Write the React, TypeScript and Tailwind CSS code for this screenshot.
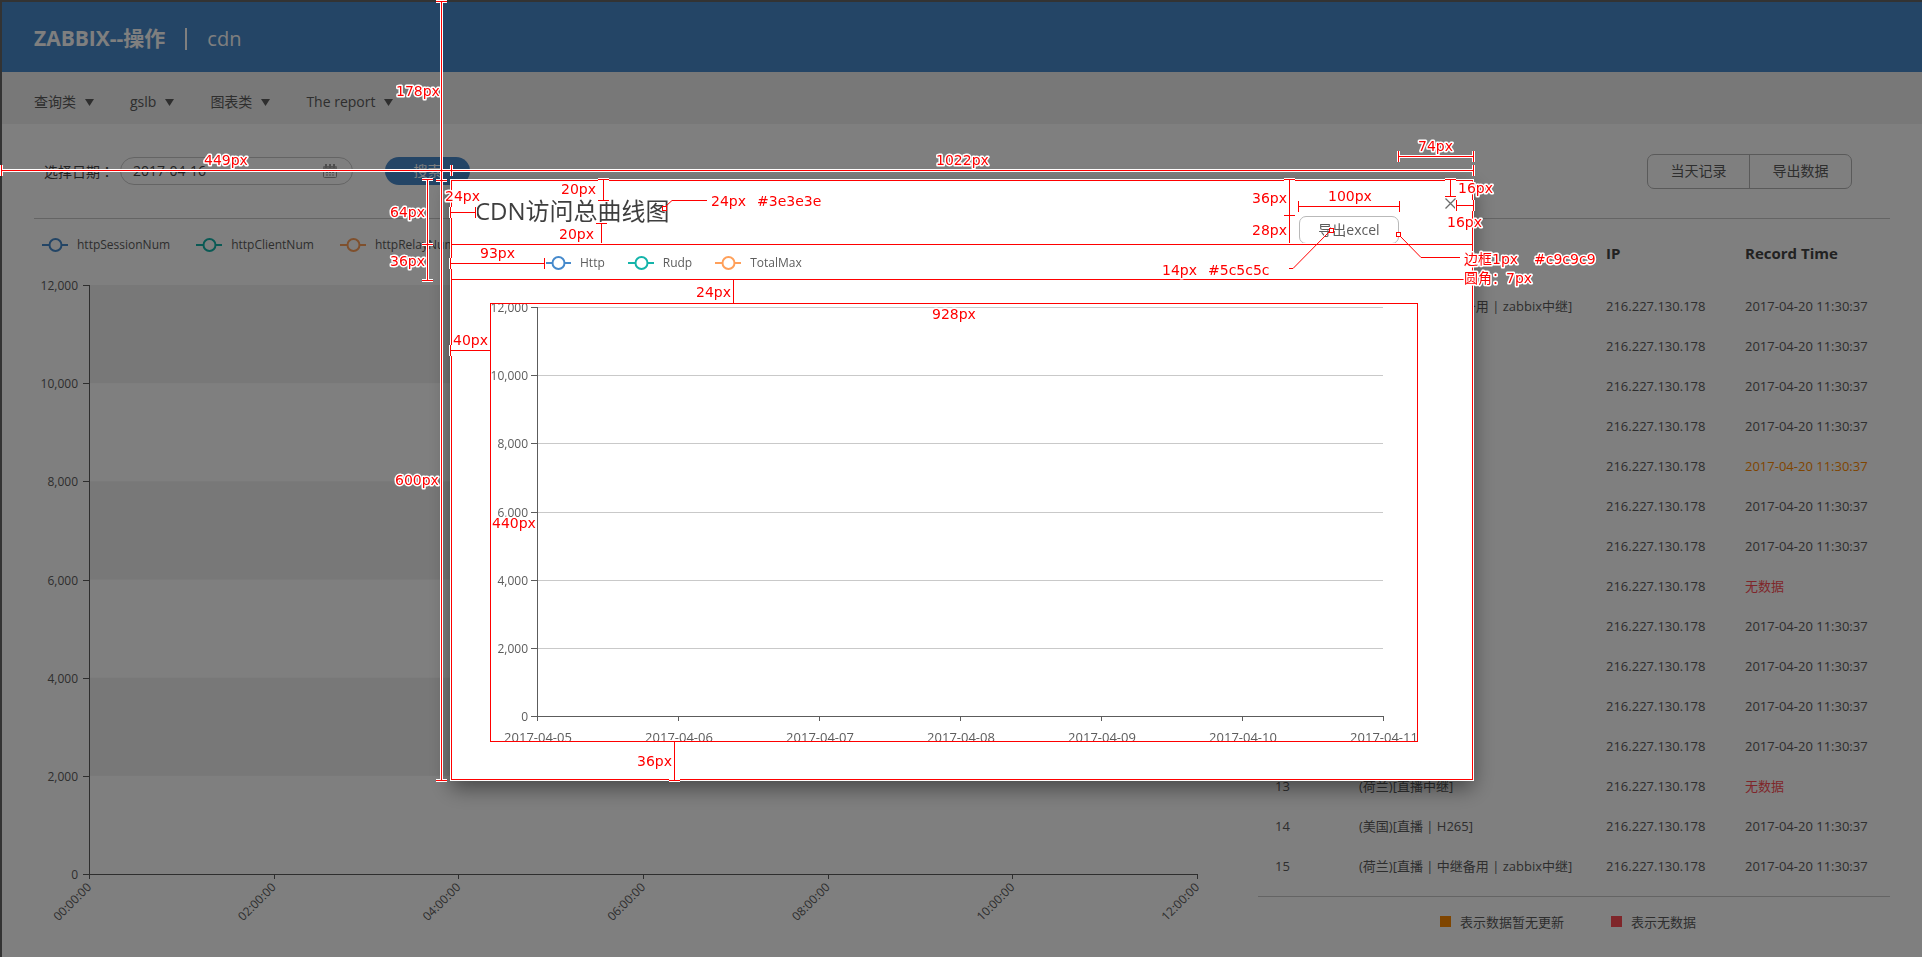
import React from 'react';

const FONT = "font-['Open_Sans','Noto_Sans_CJK_SC',sans-serif]";

type Series = { name: string; color: string };
type Row = { id: number; name: string; ip: string; time: string; state: 'ok' | 'stale' | 'none' };

const PAGE_SERIES: Series[] = [
  { name: 'httpSessionNum', color: '#468acc' },
  { name: 'httpClientNum', color: '#14b4aa' },
  { name: 'httpRelayNum', color: '#ffa05a' },
];

const DIALOG_SERIES: Series[] = [
  { name: 'Http', color: '#468acc' },
  { name: 'Rudp', color: '#14b4aa' },
  { name: 'TotalMax', color: '#ffa05a' },
];

const Y_LABELS = ['12,000', '10,000', '8,000', '6,000', '4,000', '2,000', '0'];
const HOURS = ['00:00:00', '02:00:00', '04:00:00', '06:00:00', '08:00:00', '10:00:00', '12:00:00'];
const DAYS = ['2017-04-05', '2017-04-06', '2017-04-07', '2017-04-08', '2017-04-09', '2017-04-10', '2017-04-11'];

const ROWS: Row[] = Array.from({ length: 15 }, (_, i) => {
  const id = i + 1;
  const state = id === 5 ? 'stale' : id === 8 || id === 13 ? 'none' : 'ok';
  const name =
    id === 1 || id === 15 ? '(荷兰)[直播 | 中继备用 | zabbix中继]' : id === 14 ? '(美国)[直播 | H265]' : '(荷兰)[直播中继]';
  return { id, name, ip: '216.227.130.178', time: state === 'none' ? '无数据' : '2017-04-20 11:30:37', state };
});

const STATE_COLOR = { ok: 'text-[#5c5c5c]', stale: 'text-[#ff8a00]', none: 'text-[#ff4d55]' };

function Legend({ items, className }: { items: Series[]; className: string }) {
  return (
    <ul className={`flex items-center text-xs leading-5 text-[#5c5c5c] ${className}`}>
      {items.map((s) => (
        <li key={s.name} className="flex items-center gap-[9px]">
          <svg width="26" height="14" aria-hidden="true">
            <path d="M0 7H26" stroke={s.color} strokeWidth="2" />
            <circle cx="13.5" cy="7" r="6" fill="#fff" stroke={s.color} strokeWidth="2" />
          </svg>
          {s.name}
        </li>
      ))}
    </ul>
  );
}

function SessionChart() {
  const h = 589;
  const step = h / 6;
  return (
    <svg className="block w-full overflow-visible text-xs" height={h} role="img" aria-label="cdn">
      {[0, 2, 4].map((i) => (
        <rect key={i} x="0" y={i * step} width="100%" height={step} fill="#f0f0f0" />
      ))}
      <g shapeRendering="crispEdges" stroke="#5c5c5c">
        <line x1="0.5" x2="0.5" y1="0" y2={h + 4} />
        <line x1="0" x2="100%" y1={h + 0.5} y2={h + 0.5} />
        {Y_LABELS.map((l, i) => (
          <line key={l} x1="-6" x2="0" y1={Math.round(i * step) + 0.5} y2={Math.round(i * step) + 0.5} />
        ))}
      </g>
      {Y_LABELS.map((l, i) => (
        <text key={l} x="-11" y={Math.round(i * step) + 5} textAnchor="end" fill="#5c5c5c">
          {l}
        </text>
      ))}
      {HOURS.map((l, i) => (
        <svg key={l} x={`${(i * 100) / 6}%`} y={h} className="overflow-visible">
          <path d="M.5 0V5" stroke="#5c5c5c" shapeRendering="crispEdges" />
          <text transform="translate(3 14) rotate(-45)" textAnchor="end" fill="#5c5c5c">
            {l}
          </text>
        </svg>
      ))}
    </svg>
  );
}

function VisitsChart() {
  const h = 409;
  const step = h / 6;
  return (
    <svg className="block w-full overflow-visible" height={h} role="img" aria-label="CDN访问总曲线图">
      <g shapeRendering="crispEdges">
        {Y_LABELS.map((l, i) => {
          const y = Math.round(i * step) + 0.5;
          return (
            <g key={l}>
              <line x1="0" x2="100%" y1={y} y2={y} stroke={i === 6 ? '#5c5c5c' : '#c9c9c9'} />
              <line x1="-6" x2="0" y1={y} y2={y} stroke="#5c5c5c" />
            </g>
          );
        })}
        <line x1="0.5" x2="0.5" y1="0" y2={h} stroke="#5c5c5c" />
      </g>
      {Y_LABELS.map((l, i) => (
        <text key={l} x="-9" y={Math.round(i * step) + 5} textAnchor="end" fill="#5c5c5c" className="text-xs">
          {l}
        </text>
      ))}
      {DAYS.map((l, i) => (
        <svg key={l} x={`${(i * 100) / 6}%`} y={h} className="overflow-visible">
          <path d="M.5 0V5" stroke="#5c5c5c" shapeRendering="crispEdges" />
          <text x="1" y="26" textAnchor="middle" fill="#5c5c5c" className="text-[13px]">
            {l}
          </text>
        </svg>
      ))}
    </svg>
  );
}

/* Spec overlay: each measure is a line with end caps, its label sits beside it. Coordinates are canvas pixels. */
const H_MEASURES: [number, number, number][] = [
  [170, 1, 451],
  [170, 451, 1473],
  [156, 1398, 1473],
  [212, 450, 475],
  [263, 450, 544],
  [350, 450, 490],
  [206, 1298, 1399],
  [205, 1456, 1473],
];
const V_MEASURES: [number, number, number][] = [
  [441, 1, 180],
  [441, 180, 780],
  [427, 179, 244],
  [427, 244, 280],
  [603, 179, 200],
  [733, 279, 303],
  [674, 741, 780],
  [1289, 179, 215],
  [1450, 179, 196],
];
const LABELS: [number, number, string][] = [
  [396, 96, '178px'],
  [204, 165, '449px'],
  [936, 165, '1022px'],
  [1418, 151, '74px'],
  [390, 217, '64px'],
  [390, 266, '36px'],
  [395, 485, '600px'],
  [445, 201, '24px'],
  [561, 194, '20px'],
  [559, 239, '20px'],
  [711, 206, '24px'],
  [757, 206, '#3e3e3e'],
  [480, 258, '93px'],
  [696, 297, '24px'],
  [453, 345, '40px'],
  [492, 528, '440px'],
  [932, 319, '928px'],
  [637, 766, '36px'],
  [1252, 203, '36px'],
  [1252, 235, '28px'],
  [1328, 201, '100px'],
  [1458, 193, '16px'],
  [1447, 227, '16px'],
  [1162, 275, '14px'],
  [1208, 275, '#5c5c5c'],
  [1464, 264, '边框1px'],
  [1534, 264, '#c9c9c9'],
  [1464, 283, '圆角：7px'],
];

function Measures() {
  const frame = 'M451.5 180.5H1472.5V779.5H451.5Z M451.5 244.5H1472.5 M451.5 279.5H1472.5';
  const plot = 'M490.5 303.5H1417.5V741.5H490.5Z';
  const h = H_MEASURES.map(([y, a, b]) => `M${a} ${y + 0.5}H${b + 1}M${a + 0.5} ${y - 5}V${y + 6}M${b + 0.5} ${y - 5}V${y + 6}`);
  const v = V_MEASURES.map(([x, a, b]) => `M${x + 0.5} ${a}V${b + 1}M${x - 5} ${a + 0.5}H${x + 6}M${x - 5} ${b + 0.5}H${x + 6}`);
  const open = 'M601.5 223V243 M596 223.5H607 M1289.5 216V243';
  const measures = [...h, ...v, open].join('');
  return (
    <svg className="pointer-events-none absolute top-0 left-0 overflow-visible" width="1" height="1">
      <g transform="translate(-451 -180)" fill="none">
        <g shapeRendering="crispEdges">
          <path d={frame} stroke="#fff" strokeWidth="3" />
          <path d={frame + plot} stroke="#f00" />
          <path d={measures} stroke="#fff" strokeWidth="3" />
          <path d={measures} stroke="#f00" />
        </g>
        <path
          d="M666 206L672 200.5H707 M1329 232L1293 268.5H1289 M1400 236L1421 257.5H1460"
          stroke="#f00"
        />
        <path
          d="M662.5 206.5h4v4h-4Z M1329.5 228.5h4v4h-4Z M1396.5 232.5h4v4h-4Z"
          fill="#fff"
          stroke="#f00"
          shapeRendering="crispEdges"
        />
        <g
          className="font-['DejaVu_Sans','Noto_Sans_CJK_SC',sans-serif] text-sm"
          fill="#f00"
          stroke="#fff"
          strokeWidth="3"
          strokeLinejoin="round"
          paintOrder="stroke"
        >
          {LABELS.map(([x, y, t]) => (
            <text key={`${x}-${y}`} x={x} y={y}>
              {t}
            </text>
          ))}
        </g>
      </g>
    </svg>
  );
}

function NavItem({ children }: { children: React.ReactNode }) {
  return (
    <li>
      <button type="button" className="flex items-center gap-[9px] whitespace-nowrap">
        {children}
        <svg width="9" height="7" aria-hidden="true">
          <path d="M0 0H9L4.500 7Z" fill="#5c5c5c" />
        </svg>
      </button>
    </li>
  );
}

function CalendarIcon() {
  return (
    <svg width="14" height="14" viewBox="0 0 14 14" fill="none" aria-hidden="true">
      <rect x="0.5" y="2.500" width="13" height="11" rx="1" stroke="#9a9a9a" />
      <path d="M0 2.500H14V6H0Z" fill="#b5b5b5" />
      <path d="M3 0V4M7 0V4M11 0V4" stroke="#9a9a9a" strokeWidth="2" />
      <path d="M3 8.500h2M6 8.500h2M9 8.500h2M3 11h2M6 11h2M9 11h2" stroke="#9a9a9a" />
    </svg>
  );
}

function ExportDialog() {
  return (
    <div className="fixed inset-0 flex items-start justify-center bg-black/50 pt-[180px] pl-0.5">
      <div
        role="dialog"
        aria-labelledby="dialog-title"
        className="relative h-[600px] w-[1022px] shrink-0 bg-white shadow-[0_8px_20px_rgba(0,0,0,0.45)]"
      >
        <div className="flex h-16 items-start pl-6">
          <h2 id="dialog-title" className="grow pt-[15px] text-2xl leading-8 text-[#3e3e3e]">
            CDN访问总曲线图
          </h2>
          <button
            type="button"
            className="mt-9 h-7 w-[100px] rounded-[7px] border border-[#b9b9b9] text-sm leading-6 text-[#5c5c5c]"
          >
            导出excel
          </button>
          <button type="button" aria-label="关闭" className="mt-[18px] mr-[17px] ml-[46px]">
            <svg width="11" height="11" className="block">
              <path d="M0.5 0.5L10.500 10.500M10.500 0.5L0.5 10.500" stroke="#6c6c6c" strokeWidth="1.300" />
            </svg>
          </button>
        </div>
        <Legend items={DIALOG_SERIES} className="h-[38px] gap-[23px] pl-[94px]" />
        <div className="mt-[22px] ml-10 h-[438px] w-[928px] overflow-hidden pt-[3px] pr-9 pl-[46px]">
          <VisitsChart />
        </div>
        <Measures />
      </div>
    </div>
  );
}

export default function App() {
  return (
    <div className={`min-h-screen border-t-2 border-l-2 border-[#666] bg-white text-[#5c5c5c] ${FONT}`}>
      <header className="flex h-[70px] items-center bg-[#488acc] px-8 pt-1 text-xl text-white">
        <h1 className="text-[21px] font-bold">ZABBIX--操作</h1>
        <span className="mx-5 h-[22px] w-0.5 bg-white" />
        <span>cdn</span>
      </header>
      <nav className="h-[52px] bg-[#f0f0f0] px-8 text-sm">
        <ul className="flex h-full items-center gap-9 pt-2">
          <NavItem>查询类</NavItem>
          <NavItem>gslb</NavItem>
          <NavItem>图表类</NavItem>
          <NavItem>The report</NavItem>
        </ul>
      </nav>
      <main className="px-8">
        <form className="flex h-[95px] items-center border-b border-[#c9c9c9] pl-2.5 text-sm">
          <label
            htmlFor="day"
            className="w-[76px] whitespace-nowrap font-['Noto_Sans_CJK_TC',sans-serif] text-[#444]"
          >
            选择日期：
          </label>
          <div className="flex h-7 w-[233px] items-center rounded-full border border-[#c9c9c9] pr-[15px] pl-3">
            <input id="day" type="text" defaultValue="2017-04-16" className="min-w-0 grow bg-transparent text-[#444] outline-none" />
            <CalendarIcon />
          </div>
          <button type="button" className="ml-8 h-7 w-[85px] rounded-full bg-[#488acc] text-white">
            搜索
          </button>
          <div className="mr-[38px] ml-auto flex h-[35px] rounded-[7px] border border-[#b4b4b4]">
            <button type="button" className="w-[102px] border-r border-[#b4b4b4]">
              当天记录
            </button>
            <button type="button" className="w-[101px]">
              导出数据
            </button>
          </div>
        </form>
        <div className="flex gap-[61px]">
          <section className="min-w-0 grow">
            <Legend items={PAGE_SERIES} className="h-[52px] gap-[26px] pl-2" />
            <div className="mt-3.5 pl-[55px]">
              <SessionChart />
            </div>
          </section>
          <section className="w-[632px] shrink-0">
            <table className="w-full table-fixed text-left text-[13px] leading-5">
              <thead>
                <tr className="h-[67px] text-[15px] text-[#444]">
                  <th className="w-[101px] pl-[17px]">ID</th>
                  <th className="w-[247px]">Name</th>
                  <th className="w-[139px]">IP</th>
                  <th>Record Time</th>
                </tr>
              </thead>
              <tbody>
                {ROWS.map((r) => (
                  <tr key={r.id} className="h-10">
                    <td className="pl-[17px]">{r.id}</td>
                    <td>{r.name}</td>
                    <td>{r.ip}</td>
                    <td className={STATE_COLOR[r.state]}>{r.time}</td>
                  </tr>
                ))}
              </tbody>
            </table>
            <div className="mt-2.5 flex h-[50px] items-center justify-center border-t border-[#c9c9c9] pr-3 text-[13px] leading-5">
              <span className="mr-[9px] size-[11px] bg-[#ff8a00]" />
              <span className="mr-[47px]">表示数据暂无更新</span>
              <span className="mr-[9px] size-[11px] bg-[#ff4d55]" />
              <span>表示无数据</span>
            </div>
          </section>
        </div>
      </main>
      <ExportDialog />
    </div>
  );
}
